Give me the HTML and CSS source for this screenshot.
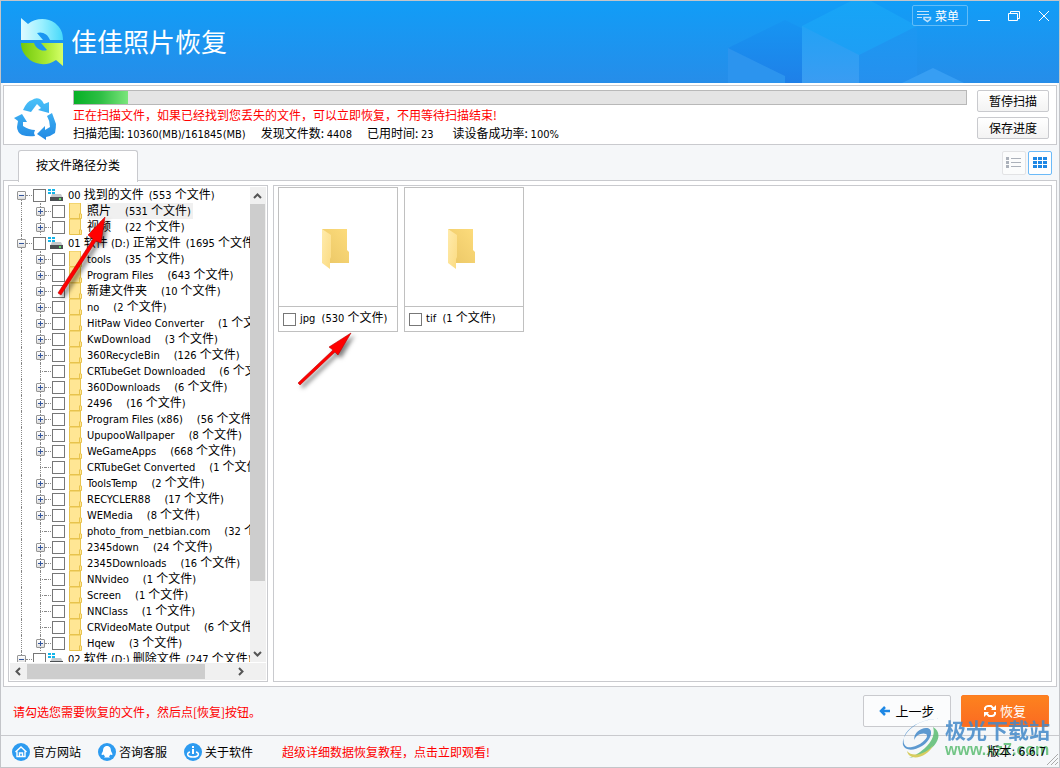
FILE: index.html
```html
<!DOCTYPE html>
<html lang="zh-CN">
<head>
<meta charset="utf-8">
<title>佳佳照片恢复</title>
<link rel="stylesheet" href="styles.css">
</head>
<body>
<div class="window">
  <header class="header">
    <svg class="cubes" width="360" height="82" viewBox="0 0 360 82" aria-hidden="true">
      <defs>
        <linearGradient id="c1" x1="0" y1="0" x2="0" y2="1"><stop offset="0" stop-color="#23a2f5"/><stop offset="1" stop-color="#3a9cf2"/></linearGradient>
        <linearGradient id="c2" x1="0" y1="0" x2="0" y2="1"><stop offset="0" stop-color="#1695f2"/><stop offset="1" stop-color="#1f80e8"/></linearGradient>
        <linearGradient id="c3" x1="0" y1="0" x2="0" y2="1"><stop offset="0" stop-color="#16a5f7"/><stop offset="1" stop-color="#229bf3"/></linearGradient>
        <linearGradient id="c4" x1="0" y1="0" x2="0" y2="1"><stop offset="0" stop-color="#1b98f2"/><stop offset="1" stop-color="#2690ee"/></linearGradient>
      </defs>
      <path d="M29 47 86 19 143 47V82H29z" fill="url(#c2)"/>
      <path d="M29 47 86 75V82H29z" fill="#2c94ee"/>
      <path d="M103 25 152 0H172L218 25V82H103z" fill="url(#c3)"/>
      <path d="M103 25 160 54V82H103z" fill="url(#c1)"/>
      <path d="M160 54 218 25V82H160z" fill="url(#c4)"/>
      <path d="M203 82 234 67 265 82z" fill="#379ef3"/>
    </svg>
    <svg class="logo" width="44" height="50" viewBox="0 0 44 50" aria-hidden="true">
      <defs>
        <linearGradient id="lb" x1="0" y1="0" x2="1" y2="0"><stop offset="0" stop-color="#dffaff"/><stop offset=".5" stop-color="#9af0ff"/><stop offset="1" stop-color="#45d8fa"/></linearGradient>
        <linearGradient id="lg" x1="0" y1="0" x2="1" y2="0"><stop offset="0" stop-color="#72c80c"/><stop offset=".6" stop-color="#a8e934"/><stop offset="1" stop-color="#d5ff68"/></linearGradient>
      </defs>
      <path d="M1 1 8 7C15 1 27 0 35 6 41 11 43 16 43 23H30C28 17 22 14 17 16L23 23H1z" fill="url(#lb)"/>
      <path d="M43 49 36 43C28 49 17 48 10 43 4 38 1 33 1 26H14C16 32 22 35 27 33L21 26H43z" fill="url(#lg)"/>
    </svg>
    <h1 class="title">佳佳照片恢复</h1>
    <div class="controls">
      <button class="menu" type="button">
        <svg width="16" height="14" viewBox="0 0 16 14" fill="none" stroke="#c4e4fc" aria-hidden="true"><path d="M0 2.500H12M0 5.500H12M0 8.500H5"/><path d="M7 8.500H13.500V10L10.500 12.500 7 10z" stroke-width="1.500"/></svg>
        <span>菜单</span>
      </button>
      <button class="win" type="button" aria-label="最小化"><svg width="12" height="12" viewBox="0 0 12 12" stroke="#fff" fill="none"><path d="M0 10.500H12"/></svg></button>
      <button class="win" type="button" aria-label="还原"><svg width="12" height="12" viewBox="0 0 12 12" stroke="#fff" fill="none"><path d="M.5 3.500H9.500V10.500H.5zM2.500 3.500V1.500H11.500V8.500H9.500"/></svg></button>
      <button class="win" type="button" aria-label="关闭"><svg width="12" height="12" viewBox="0 0 12 12" stroke="#fff" fill="none"><path d="M1 1 11 11M11 1 1 11"/></svg></button>
    </div>
  </header>

  <section class="scan">
    <svg class="recycle" width="44" height="42" viewBox="0 2 44 42" aria-hidden="true">
      <defs><linearGradient id="rc" gradientUnits="userSpaceOnUse" x1="0" y1="0" x2="0" y2="44"><stop offset="0" stop-color="#4cc4fa"/><stop offset="1" stop-color="#2189e4"/></linearGradient></defs>
      <g fill="url(#rc)">
        <path d="M9 14Q13 5 18 4 22 1 26 3 29 5 30 8L35 6V17L24 14 27 12 23 8 17 16z"/>
        <path d="M0 22 8 18 13 26 9 26 9 30Q15 34 21 34L20 37 21 40Q14 41 8 39 3 36 3 31L4 25z"/>
        <path d="M33 20 38 17 42 28Q42 32 41 37 37 40 32 41V44L23 38 31 30V34L36 31Q36 25 33 20z"/>
      </g>
    </svg>
    <div class="scan-body">
      <div class="bar" role="progressbar" aria-valuenow="6" aria-valuemin="0" aria-valuemax="100"><div class="bar-fill" style="width:6%"></div></div>
      <p class="red">正在扫描文件，如果已经找到您丢失的文件，可以立即恢复，不用等待扫描结束!</p>
      <p class="stats"><span>扫描范围: <b>10360(MB)/161845(MB)</b></span><span>发现文件数: <b>4408</b></span><span>已用时间: <b>23</b></span><span class="rate">读设备成功率: <b>100%</b></span></p>
    </div>
    <div class="scan-actions">
      <button class="btn" type="button">暂停扫描</button>
      <button class="btn" type="button">保存进度</button>
    </div>
  </section>

  <nav class="tabs">
    <button class="tab" type="button">按文件路径分类</button>
    <div class="views">
      <button class="view" type="button" aria-label="列表"><svg width="16" height="12" viewBox="0 0 16 12" fill="#abb1ba"><path d="M0 0h3v3H0zM0 4h3v3H0zM0 8h3v3H0zM5 1h10v1H5zM5 5h10v1H5zM5 9h10v1H5z"/></svg></button>
      <button class="view active" type="button" aria-label="图标"><svg width="14" height="12" viewBox="0 0 14 12" fill="#1e88e5"><path d="M0 0h4v3H0zM5 0h4v3H5zM10 0h4v3h-4zM0 4h4v3H0zM5 4h4v3H5zM10 4h4v3h-4zM0 8h4v3H0zM5 8h4v3H5zM10 8h4v3h-4z"/></svg></button>
    </div>
  </nav>

  <main class="content">
    <aside class="side">
      <div class="side-main">
        <ul class="tree" id="tree"></ul>
        <div class="vscroll">
          <svg width="15" height="17" viewBox="0 0 15 17" fill="none" stroke="#555" stroke-width="2"><path d="M4 11 7.500 7.500 11 11"/></svg>
          <div class="vthumb"></div>
          <svg width="15" height="17" viewBox="0 0 15 17" fill="none" stroke="#555" stroke-width="2"><path d="M4 7 7.500 10.500 11 7"/></svg>
        </div>
      </div>
      <div class="hscroll">
        <svg width="17" height="15" viewBox="0 0 17 15" fill="none" stroke="#555" stroke-width="2"><path d="M10 4 6.500 7.500 10 11"/></svg>
        <div class="hthumb"></div>
        <svg width="17" height="15" viewBox="0 0 17 15" fill="none" stroke="#555" stroke-width="2"><path d="M6 4 9.500 7.500 6 11"/></svg>
      </div>
    </aside>
    <section class="files">
      <div class="card">
        <div class="thumb"><svg width="30" height="42" viewBox="0 0 30 42"><defs><linearGradient id="fb" x1="0" y1="1" x2="1" y2="0"><stop offset="0" stop-color="#eac665"/><stop offset="1" stop-color="#fddc7c"/></linearGradient><linearGradient id="ff" x1="0" y1="0" x2="1" y2="1"><stop offset="0" stop-color="#ffebac"/><stop offset="1" stop-color="#fbdb82"/></linearGradient></defs><path d="M1 1H26V22L28 24V35H8z" fill="url(#fb)"/><path d="M1 1 10 7V29L9 31V41L1 35z" fill="url(#ff)"/></svg></div>
        <label class="name"><input class="check" type="checkbox"><span>jpg&nbsp; (530 <i>个文件</i>)</span></label>
      </div>
      <div class="card">
        <div class="thumb"><svg width="30" height="42" viewBox="0 0 30 42"><path d="M1 1H26V22L28 24V35H8z" fill="url(#fb)"/><path d="M1 1 10 7V29L9 31V41L1 35z" fill="url(#ff)"/></svg></div>
        <label class="name"><input class="check" type="checkbox"><span>tif&nbsp; (1 <i>个文件</i>)</span></label>
      </div>
    </section>
  </main>

  <section class="actions">
    <p class="red">请勾选您需要恢复的文件，然后点[恢复]按钮。</p>
    <button class="back" type="button"><svg width="12" height="12" viewBox="0 0 12 12" fill="none" stroke="#1e88e5" stroke-width="2.500"><path d="M6 2 2 6 6 10M2 6H11"/></svg>上一步</button>
    <button class="recover" type="button"><svg width="12" height="14" viewBox="0 0 12 14" fill="none" stroke="#fff" stroke-width="2"><path d="M1 6V4Q2 2 4 2H7L10 5M11 8V10Q10 12 8 12H5L2 9"/><path d="M12 1V6H7zM0 13V8H5z" fill="#fff" stroke="none"/></svg>恢复</button>
  </section>

  <footer class="footer">
    <a class="link" href="#"><svg width="18" height="18" viewBox="0 0 18 18"><circle cx="9" cy="9" r="9" fill="#2d9bf0"/><path d="M3.500 9 9 4l5.500 5M5 8.500V13.500H13V8.500M7.500 13.500V10H10.500V13.500" fill="none" stroke="#fff" stroke-width="1.400"/></svg>官方网站</a>
    <a class="link" href="#"><svg width="18" height="18" viewBox="0 0 18 18"><circle cx="9" cy="9" r="9" fill="#2d9bf0"/><path d="M9 3C6 3 5 5.500 5 8L3.500 11C3.500 12.500 5 12 5.500 11.500L7 13.500 6 14.500H12L11 13.500 12.500 11.500C13 12 14.500 12.500 14.500 11L13 8C13 5.500 12 3 9 3z" fill="#fff"/></svg>咨询客服</a>
    <a class="link" href="#"><svg width="18" height="18" viewBox="0 0 18 18"><circle cx="9" cy="9" r="9" fill="#2d9bf0"/><path d="M9 3V5M9 6V11" fill="none" stroke="#fff" stroke-width="2"/><path d="M6 9C2 10 3 14 9 14S16 10 12 9" fill="none" stroke="#fff" stroke-width="1.500"/></svg>关于软件</a>
    <a class="promo red" href="#">超级详细数据恢复教程，点击立即观看!</a>
    <span class="version">版本: 6.6.7</span>
    <svg class="grip" width="11" height="11" viewBox="0 0 11 11" stroke="#aaa" aria-hidden="true"><path d="M0 11 11 0M4 11 11 4M8 11 11 8"/></svg>
  </footer>

  <svg class="arrow arrow-tree" width="60" height="90" viewBox="0 0 60 90" aria-hidden="true"><path d="M7 81 42 27 37 23 54 5 50 31 45 29 10 83z" fill="#f00" stroke="#b00" stroke-width=".6"/></svg>
  <svg class="arrow arrow-file" width="64" height="64" viewBox="0 0 64 64" aria-hidden="true"><path d="M3 54 38 21 34 18 56 4 43 26 40 23 5 56z" fill="#f00" stroke="#b00" stroke-width=".6"/></svg>
  <div class="watermark">
    <svg width="42" height="42" viewBox="0 0 42 42" aria-hidden="true"><path d="M42 1C26-1 10 6 4 15-1 23 2 31 10 29 20 27 28 18 24 16 20 14 12 18 13 22 10 18 17 10 24 10 33 10 29 23 20 28 12 33 3 33 1 27-1 16 16-2 42 1z" fill="#4389c9"/><path d="M31 9C44 16 33 36 7 40 22 34 35 21 31 9z" fill="#5cbd72"/><path d="M5 33C10 40 25 36 31 27 26 40 7 44 5 33z" fill="#d2c646"/></svg>
    <div><div class="wm-name">极光下载站</div><div class="wm-url">www.xz7.com</div></div>
  </div>
</div>
<script src="tree.js"></script>
</body>
</html>
```
FILE: tree.js
```
// [level, name, count, expandable, highlighted]
const rows = [
  [0, "00 找到的文件", "553", true],
  [1, "照片", "531", true, true],
  [1, "视频", "22", true],
  [0, "01 软件 (D:) 正常文件", "1695", true],
  [1, "tools", "35", true],
  [1, "Program Files", "643", true],
  [1, "新建文件夹", "10", true],
  [1, "no", "2", true],
  [1, "HitPaw Video Converter", "1", true],
  [1, "KwDownload", "3", true],
  [1, "360RecycleBin", "126", true],
  [1, "CRTubeGet Downloaded", "6", false],
  [1, "360Downloads", "6", true],
  [1, "2496", "16", true],
  [1, "Program Files (x86)", "56", true],
  [1, "UpupooWallpaper", "8", true],
  [1, "WeGameApps", "668", true],
  [1, "CRTubeGet Converted", "1", false],
  [1, "ToolsTemp", "2", true],
  [1, "RECYCLER88", "17", true],
  [1, "WEMedia", "8", true],
  [1, "photo_from_netbian.com", "32", false],
  [1, "2345down", "24", true],
  [1, "2345Downloads", "16", true],
  [1, "NNvideo", "1", false],
  [1, "Screen", "1", false],
  [1, "NNClass", "1", false],
  [1, "CRVideoMate Output", "6", false],
  [1, "Hqew", "3", true],
  [0, "02 软件 (D:) 删除文件", "247", true]
];
const cjk = s => s.replace(/[\u4e00-\u9fff]+/g, "<i>$&</i>");
const disk = '<svg class="disk" width="16" height="16" viewBox="0 0 16 16"><path d="M0 2h3v2H0zM4 2h3v2H4zM0 5h3v2H0zM4 5h3v2H4z" fill="#12b5ea"/><path d="M4 7h9l2 4H2z" fill="#c5c9cc"/><path d="M2 10h13v4H2z" fill="#4b4f52"/><path d="M11 11h2v2h-2z" fill="#5fe06b"/></svg>';
const folder = '<svg class="folder" width="14" height="16" viewBox="0 0 14 16"><path d="M.5 0H11.500V11H12.500V15.500H.5z" fill="#ffe694" stroke="#e8c34d"/><path d="M10.500 10.500V15.500" stroke="#e8c34d"/></svg>';
document.getElementById("tree").innerHTML = rows.map(([level, name, count, expandable, hot]) =>
  `<li class="row level${level}">` +
  (expandable ? `<button class="exp" type="button" aria-label="展开">${
    `<svg width="9" height="9" viewBox="0 0 9 9" stroke="#33559c"><path d="M2 4.500H7${level ? "M4.500 2V7" : ""}"/></svg>`}</button>` : '<span class="stub"></span>') +
  `<span class="dots"></span><label class="item"><input class="check" type="checkbox">${level ? folder : disk}` +
  `<span class="text${hot ? " hot" : ""}"><span>${cjk(name)}</span><span>(${count} <i>个文件</i>)</span></span></label></li>`
).join("");
```
FILE: styles.css
```css
* { box-sizing: border-box; }
html, body { margin: 0; height: 100%; }
body {
  font-family: "Noto Sans CJK SC", sans-serif;
  font-size: 12px;
  line-height: 16px;
  color: #000;
}
p, h1, ul { margin: 0; padding: 0; }
button { font: inherit; color: inherit; margin: 0; padding: 0; }
i { font-family: "Noto Sans CJK SC", sans-serif; font-size: 12px; font-style: normal; line-height: 1; }
svg { display: block; flex: none; }
.red { color: #f00; }

.window {
  position: relative;
  display: flex;
  flex-direction: column;
  min-height: 100vh;
  border: 1px solid #c3c5c9;
  background: #f5f7f9;
  overflow: hidden;
}

.header {
  position: relative;
  display: flex;
  align-items: flex-start;
  height: 82px;
  flex: none;
  padding-left: 19px;
  background: linear-gradient(#119df7, #268de9);
}
.cubes { position: absolute; right: 0; top: 0; }
.logo { margin-top: 16px; }
.title {
  margin: 22px 0 0 7px;
  font-size: 26px;
  font-weight: 400;
  line-height: 36px;
  color: #fff;
}
.controls { position: relative; display: flex; align-items: flex-start; margin-left: auto; }
.menu {
  display: flex;
  align-items: center;
  gap: 2px;
  height: 21px;
  margin: 4px 0 0;
  padding: 0 8px 0 4px;
  border: 1px solid #62bcf8;
  border-radius: 2px;
  background: transparent;
  color: #fff;
}
.win {
  display: flex;
  justify-content: center;
  width: 30px;
  padding-top: 9px;
  border: 0;
  background: transparent;
}
.menu + .win { margin-left: 1px; }

.scan {
  display: flex;
  flex: none;
  margin: 2px 2px 0;
  padding: 4px 7px 2px 10px;
  border: 1px solid #c9cace;
  background: #fff;
  box-shadow: 0 -2px #fff;
}
.recycle { margin: 8px 15px 0 0; }
.scan-body { flex: 1; line-height: 18px; }
.bar { height: 15px; margin-bottom: 1px; border: 1px solid #b8b8b8; background: #e4e4e4; }
.bar-fill { height: 100%; background: linear-gradient(90deg, #06b025, #2fbf45 50%, #7be57b); }
.stats { display: flex; gap: 15px; height: 18px; }
.stats b, .text, .name, .version {
  font-family: "DejaVu Sans Condensed", "Noto Sans", "Noto Sans CJK SC", sans-serif;
  font-size: 11px;
  font-weight: 400;
}
.stats b { line-height: 1; }
.rate { margin-left: 4px; }
.scan-actions { display: flex; flex-direction: column; gap: 5px; margin-left: 10px; }
.btn {
  width: 72px;
  height: 22px;
  border: 1px solid #c9cace;
  border-radius: 2px;
  background: linear-gradient(#fff, #f3f3f3);
}

.tabs { display: flex; flex: none; height: 35px; padding: 5px 7px 0 17px; }
.tab {
  position: relative;
  width: 120px;
  height: 32px;
  padding-bottom: 4px;
  border: 1px solid #c9cace;
  border-bottom: 0;
  border-radius: 3px 3px 0 0;
  background: #fff;
}
.views { display: flex; gap: 2px; margin-left: auto; padding-top: 1px; }
.view {
  display: flex;
  align-items: center;
  justify-content: center;
  width: 24px;
  height: 24px;
  border: 1px solid #e2e3e5;
  border-radius: 2px;
  background: #fbfcfc;
}
.view.active { border-color: #6bbaf8; background: #fff; }

.content {
  display: flex;
  flex: 1;
  gap: 5px;
  margin: 0 2px;
  padding: 4px;
  border: 1px solid #c9cace;
  background: #fff;
}
.side {
  display: flex;
  flex-direction: column;
  width: 260px;
  flex: none;
  padding: 1px;
  border: 1px solid #c9cace;
}
.side-main { display: flex; flex: 1 1 0; min-height: 0; }
.tree { flex: 1; min-width: 0; overflow: hidden; list-style: none; }
.row { position: relative; display: flex; align-items: center; height: 16px; padding-left: 7px; white-space: nowrap; }
.row::before, .level1::after {
  content: "";
  position: absolute;
  left: 11px;
  top: 0;
  height: 16px;
  border-left: 1px dotted #888;
}
.level1::after { left: 30px; }
.level1 { padding-left: 26px; }
.row:first-child::before { top: 8px; height: 8px; }
.exp {
  position: relative;
  z-index: 1;
  flex: none;
  width: 9px;
  height: 9px;
  border: 1px solid #959595;
  border-radius: 1px;
  background: linear-gradient(#fff, #ddd);
}
.exp svg { margin: -1px; }
.stub { flex: none; width: 5px; margin-left: 4px; border-top: 1px dotted #888; }
.dots { flex: none; width: 6px; margin-right: 1px; border-top: 1px dotted #888; }
.item { display: flex; align-items: center; flex: none; }
.check {
  appearance: none;
  flex: none;
  width: 13px;
  height: 13px;
  margin: 0;
  border: 1px solid #777;
  background: #fff;
}
.disk { margin: 0 4px 0 2px; }
.folder { margin: 0 4px; }
.text { display: flex; align-items: baseline; gap: 14px; height: 16px; line-height: 18px; }
.level0 .text { gap: 5px; }
.hot { background: #f0f0f0; padding-right: 2px; }
.vscroll { display: flex; flex-direction: column; width: 16px; background: #f0f0f0; flex: none; }
.vthumb { flex: 0 1 377px; margin-right: 1px; background: #cdcdcd; }
.vthumb + svg { margin-top: auto; }
.hscroll { display: flex; height: 17px; margin-top: 1px; padding: 1px 16px 1px 0; background: #f0f0f0; flex: none; }
.hthumb { width: 178px; margin-right: auto; background: #cdcdcd; }

.files { display: flex; flex: 1; align-items: flex-start; gap: 6px; padding: 1px 4px; border: 1px solid #c9cace; }
.card { width: 120px; border: 1px solid #c0c0c0; }
.thumb { display: flex; align-items: center; justify-content: center; height: 119px; padding: 3px 4px 0 0; border-bottom: 1px solid #c0c0c0; }
.name { display: flex; align-items: center; gap: 4px; height: 24px; padding-left: 4px; line-height: 18px; }

.actions { display: flex; align-items: center; flex: none; gap: 10px; height: 49px; padding: 0 10px 0 12px; border-bottom: 1px solid #c9cace; }
.actions .red { margin-right: auto; padding-top: 2px; }
.back, .recover {
  display: flex;
  align-items: center;
  justify-content: center;
  gap: 4px;
  width: 88px;
  height: 32px;
  border: 1px solid #c9cace;
  border-radius: 2px;
  background: #fbfcfd;
  font-size: 13px;
}
.recover { border-color: #fd7a22; background: linear-gradient(#fd821e, #fb6b22); color: #fff; }

.footer { position: relative; display: flex; align-items: center; flex: none; height: 31px; padding: 0 13px 0 11px; }
.link { display: flex; align-items: center; gap: 3px; margin-right: 17px; color: #000; text-decoration: none; }
.promo { margin-left: 12px; text-decoration: none; }
.version { position: relative; z-index: 3; margin-left: auto; font-size: 12px; }
.grip { position: absolute; right: 1px; bottom: 2px; }

.arrow { position: absolute; z-index: 2; filter: drop-shadow(3px 3px 2px rgba(0, 0, 0, .5)); }
.arrow-tree { left: 50px; top: 211px; }
.arrow-file { left: 294px; top: 328px; }
.watermark { position: absolute; z-index: 2; right: 9px; bottom: 6px; display: flex; gap: 1px; opacity: .85; pointer-events: none; }
.watermark svg { margin-top: -1px; }
.wm-name { font-size: 21px; font-weight: 700; line-height: 20px; color: #4389c9; }
.wm-url { font-family: "Liberation Sans", sans-serif; font-size: 16px; font-weight: 700; line-height: 22px; color: #5cbd72; }
```
